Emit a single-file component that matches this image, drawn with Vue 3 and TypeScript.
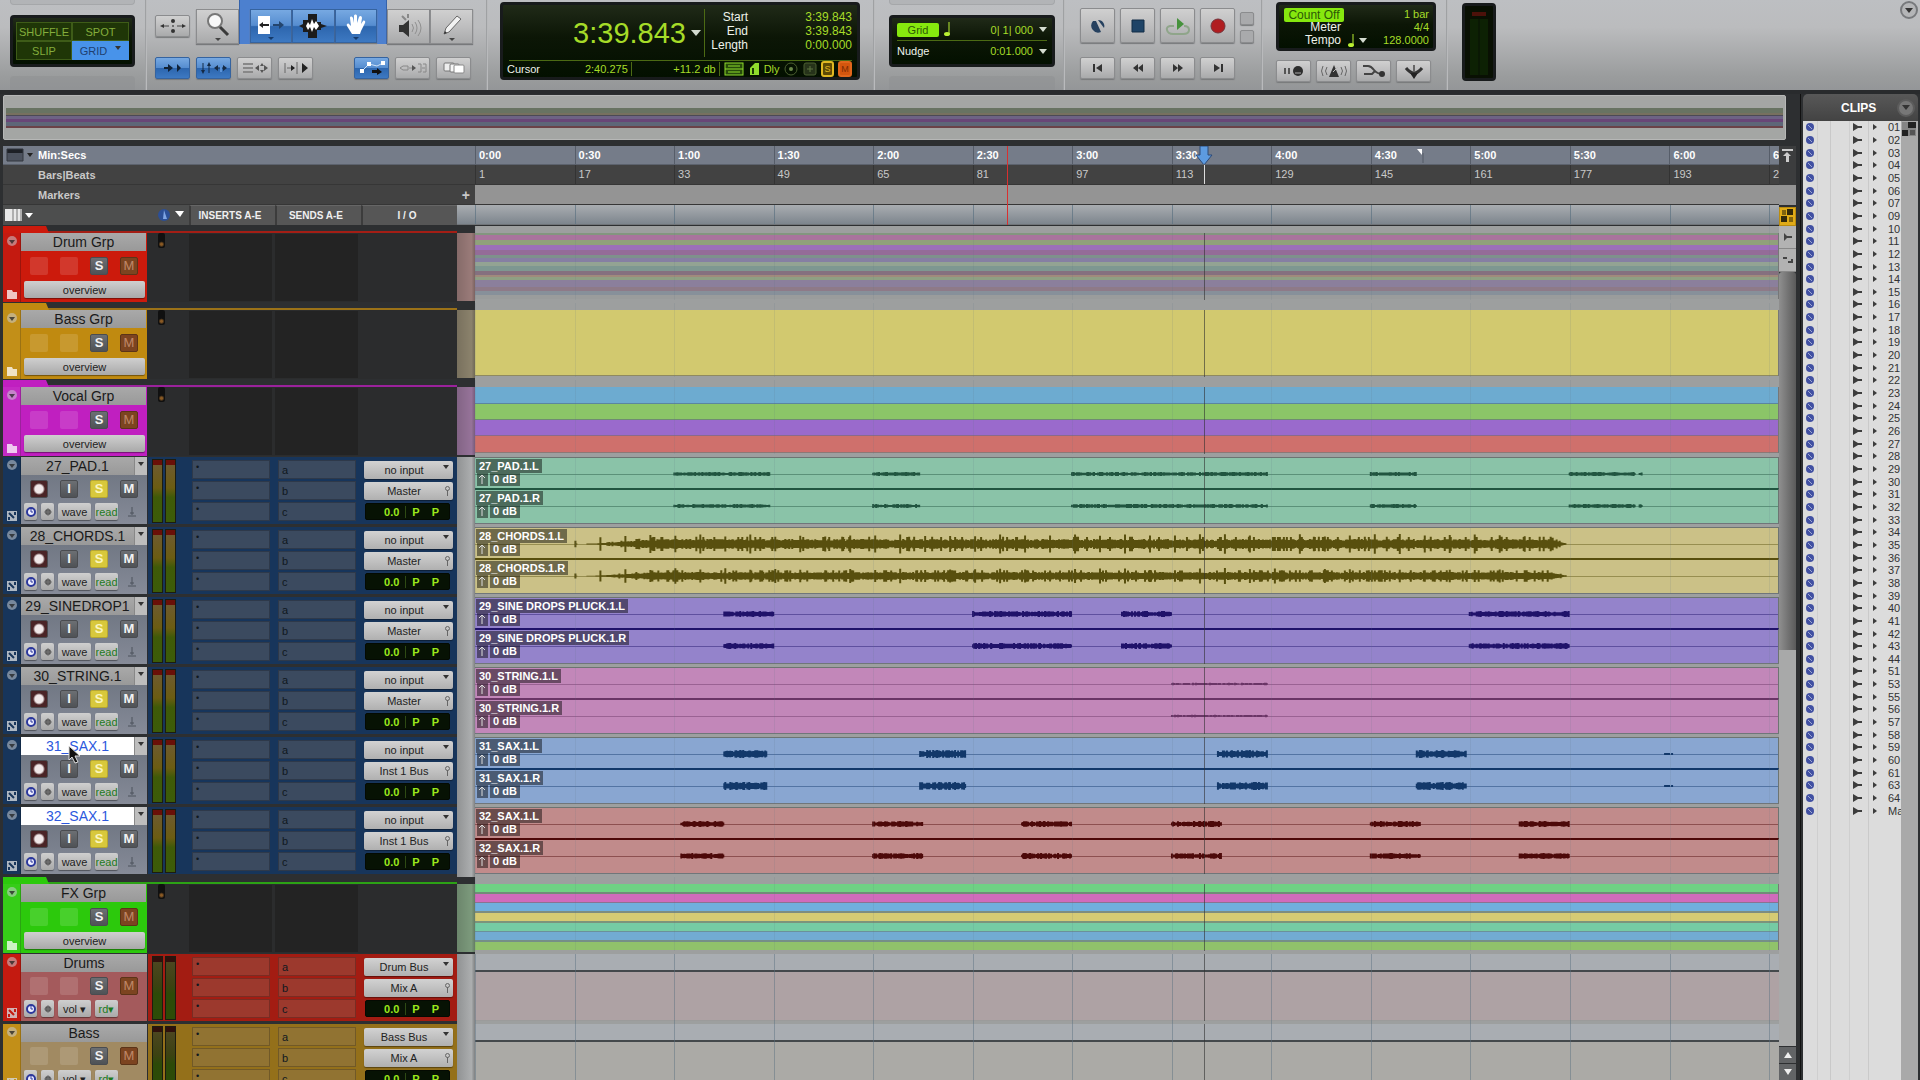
<script setup lang="ts">
interface Take {
  label: string
  lane: string
  ink: string
  level: number
  spans: [number, number][]
  dense?: boolean
}
interface Track {
  kind: 'group' | 'audio' | 'aux'
  name: string
  color: string
  side: string
  body?: string
  scale?: string
  input?: string
  output?: string
  selected?: boolean
  stripes?: [string, number][]
  take?: Take
}

const total = 393
const playhead = 219.843
const cursor = 160.275
const sessionEnd = 285
const at = (s: number) => `${(s / total) * 100}%`

const marks = Array.from({ length: 14 }, (_, i) => ({
  time: `${Math.floor(i / 2)}:${i % 2 ? '30' : '00'}`,
  bar: i * 16 + 1,
}))

const noise = (n: number) => {
  const v = Math.sin(n * 12.9898) * 43758.5453
  return v - Math.floor(v)
}

const waveWidth = 1304
function wave(take: Take, seed: number): string {
  let d = ''
  for (const [from, to] of take.spans) {
    const a = Math.round((from / total) * waveWidth)
    const b = Math.round((to / total) * waveWidth)
    for (let x = a; x < b; x++) {
      const r = noise(x + seed * 977)
      let h = take.level * (0.4 + r * 0.6)
      if (take.dense) {
        const k = x - a
        const fade = Math.min(1, Math.max(0, (k - 20) / 60)) * Math.min(1, (b - x) / 16)
        h = (2.6 + r * 2.2 + (r > 0.88 ? 2 : 0)) * fade + 0.4
        if (k % 25 < 1 && b - x > 20) h = take.level * (0.7 + r * 0.3) * Math.min(1, (k + 30) / 70)
        if (seed % 2) h *= 0.8
        if (k < 12 && k > 1) continue
      }
      d += `M${x}.5 ${(16 - h).toFixed(1)}V${(16 + h).toFixed(1)}`
    }
  }
  return d
}

const navy = '#17355b'
const audio = (name: string, output: string, take: Take, selected = false): Track => ({
  kind: 'audio', name, color: '#6c7480', side: navy, body: navy, input: 'no input', output, take, selected,
})

const tracks: Track[] = [
  {
    kind: 'group', name: 'Drum Grp', color: '#cc1a0c', side: '#c41a10', scale: '#9a7b79',
    stripes: [
      ['#83967f', 2], ['#a9749d', 5], ['#90a17a', 5], ['#9c70b8', 5], ['#946c98', 5], ['#7e918c', 3],
      ['#867fa3', 4], ['#93a393', 4], ['#7e9791', 5], ['#85707f', 4], ['#a08a7c', 2], ['#8f9f83', 3],
      ['#8b7f9c', 7], ['#8e7a88', 4], ['#87909a', 4], ['#9a9c9c', 4],
    ],
  },
  { kind: 'group', name: 'Bass Grp', color: '#c08a10', side: '#c28f18', scale: '#8b826c', stripes: [['#d2c96f', 65], ['#8f8a60', 1]] },
  {
    kind: 'group', name: 'Vocal Grp', color: '#c01fc0', side: '#c42bc4', scale: '#967399',
    stripes: [
      ['#6dabd0', 16], ['#5b86a0', 1], ['#8bc568', 15], ['#6f8a72', 1], ['#9a6acc', 15], ['#8a6a8c', 1], ['#cf706c', 16], ['#8d7876', 1],
    ],
  },
  audio('27_PAD.1', 'Master', {
    label: '27_PAD.1', lane: '#8ac3a8', ink: '#215540', level: 2,
    spans: [[60, 89], [120, 134], [180, 239], [270, 284], [330, 350], [351, 352]],
  }),
  audio('28_CHORDS.1', 'Master', {
    label: '28_CHORDS.1', lane: '#cbc187', ink: '#584f0e', level: 10, dense: true, spans: [[30, 329]],
  }),
  audio('29_SINEDROP1', 'Master', {
    label: '29_SINE DROPS PLUCK.1', lane: '#9483cb', ink: '#20126a', level: 3,
    spans: [[75, 90], [150, 180], [195, 210], [300, 330]],
  }),
  audio('30_STRING.1', 'Master', {
    label: '30_STRING.1', lane: '#c287b9', ink: '#6a3566', level: 1.2, spans: [[210, 239]],
  }),
  audio('31_SAX.1', 'Inst 1 Bus', {
    label: '31_SAX.1', lane: '#89a6d1', ink: '#12386a', level: 4,
    spans: [[75, 88], [134, 148], [224, 239], [284, 299]],
  }, true),
  audio('32_SAX.1', 'Inst 1 Bus', {
    label: '32_SAX.1', lane: '#c18b8b', ink: '#4d0909', level: 3,
    spans: [[62, 75], [120, 135], [165, 180], [210, 225], [270, 285], [315, 330]],
  }, true),
  {
    kind: 'group', name: 'FX Grp', color: '#2cc90c', side: '#36cc18', scale: '#7c9a7c',
    stripes: [
      ['#6fd184', 8], ['#718c78', 2], ['#d06bbb', 8], ['#8a7390', 1], ['#70afdd', 8], ['#7d8d80', 2], ['#d5cb74', 8],
      ['#7c937c', 2], ['#75cba4', 8], ['#6b919a', 1], ['#72abd2', 8], ['#758f88', 2], ['#90c26b', 8],
    ],
  },
  { kind: 'aux', name: 'Drums', color: '#a45a5c', side: '#c41a10', body: '#a31c12', input: 'Drum Bus', output: 'Mix A', scale: '#aea2a4' },
  { kind: 'aux', name: 'Bass', color: '#a18a62', side: '#c28f18', body: '#94701a', input: 'Bass Bus', output: 'Mix A', scale: '#abaaa6' },
]

const range = (a: number, b: number) => Array.from({ length: b - a + 1 }, (_, i) => String(a + i).padStart(2, '0'))
const clips = [
  ...range(1, 7), ...range(9, 44), '51', '53', ...range(55, 61), '63', '64', 'Master',
]
</script>

<template>
  <div class="app">
    <header class="toolbar">
      <section class="cluster modes">
        <div class="recess top"></div>
        <div class="lcd mode-grid">
          <button>SHUFFLE</button><button>SPOT</button>
          <button>SLIP</button><button class="on">GRID<i class="tri"></i></button>
        </div>
        <div class="recess bottom"></div>
      </section>

      <section class="cluster tools">
        <div class="tool-row">
          <button class="btn small" aria-label="Zoom toggle">
            <svg width="30" height="18" viewBox="0 0 30 18"><path d="M4 9h7M19 9h7" stroke="#444" /><path d="M2 9l4-2v4zM28 9l-4-2v4z" fill="#333" /><circle cx="15" cy="4" r="2" fill="#333" /><circle cx="15" cy="14" r="2" fill="#333" /><circle cx="15" cy="9" r="1" fill="#555" /></svg>
          </button>
          <div class="strip">
            <button class="btn tool" aria-label="Zoomer">
              <svg width="30" height="32" viewBox="0 0 30 32"><path d="M16 15l9 9" stroke="#3a3a3a" stroke-width="3" /><circle cx="12" cy="10" r="7" fill="#f8f8f8" stroke="#777" stroke-width="2" /><path d="M12 27h6l-3 3z" fill="#444" /></svg>
            </button>
            <div class="smart">
              <button class="btn tool blue" aria-label="Trim">
                <svg width="34" height="32" viewBox="0 0 34 32"><path d="M4 6h12v18H4z" fill="#fff" /><path d="M6 15h9" stroke="#222" stroke-width="2" /><path d="M5 15l4-3v6z" fill="#222" /><path d="M19 15h8" stroke="#23456e" stroke-width="2" /><path d="M30 15l-5-4v8z" fill="#23456e" /><path d="M14 27h6l-3 3z" fill="#153a6a" /></svg>
              </button>
              <button class="btn tool blue" aria-label="Selector">
                <svg width="34" height="32" viewBox="0 0 34 32"><path d="M12 4h9v8h4v2l6 2-6 2v2h-4v8h-9v-6H7v-4l-4-2 4-2v-4h5z" fill="#1c1c1c" /><path d="M10 16l2-4 2 3 2-6 2 5 2-3 3 5-3 4-2-3-2 5-2-5-2 3z" fill="#fff" /></svg>
              </button>
              <button class="btn tool blue" aria-label="Grabber">
                <svg width="30" height="32" viewBox="0 0 30 32"><path d="M11 24l-5-8c-1-2 1-3 2-2l2 2-1-8c0-2 2-2 3 0l1 5V6c0-2 3-2 3 0v7l2-6c1-2 3-1 3 1l-1 6 2-3c1-1 3 0 2 2l-4 8-1 3z" fill="#fff" /><path d="M12 27h6l-3 3z" fill="#153a6a" /></svg>
              </button>
            </div>
            <button class="btn tool" aria-label="Scrubber">
              <svg width="30" height="32" viewBox="0 0 30 32"><path d="M5 14h4l6-5v17l-6-5H5z" fill="#333" /><path d="M8 5l4 4M14 3v4" stroke="#888" stroke-width="2" /><path d="M18 13q3 4 0 8M21 11q4 6 0 12M24 9q6 8 0 16" fill="none" stroke="#909090" stroke-width="1" /></svg>
            </button>
            <button class="btn tool" aria-label="Pencil">
              <svg width="30" height="32" viewBox="0 0 30 32"><path d="M7 23l2-6L20 5l4 3-12 13z" fill="#f2f2f2" stroke="#666" /><path d="M7 23l1-3 2 2z" fill="#333" /><path d="M12 27h6l-3 3z" fill="#444" /></svg>
            </button>
          </div>
        </div>
        <div class="btn-row">
          <button class="btn small blue" aria-label="Tab to transients"><svg width="28" height="14" viewBox="0 0 28 14"><path d="M5 7h5" stroke="#123" stroke-width="2" /><path d="M9 3l5 4-5 4zM18 3l4 4-4 4z" fill="#102238" /></svg></button>
          <button class="btn small blue" aria-label="Link timeline"><svg width="30" height="14" viewBox="0 0 30 14"><path d="M4 2v8M10 4v8M17 7h9" stroke="#152a44" stroke-width="1" /><path d="M2 9h4l-2 4zM8 5h4l-2-4zM15 7l4-3v6zM28 7l-4-3v6z" fill="#152a44" /><path d="M22 3v8" stroke="#5c94d8" stroke-width="2" /></svg></button>
          <button class="btn small" aria-label="Link track"><svg width="30" height="14" viewBox="0 0 30 14"><path d="M3 3h10M3 7h10M3 11h10" stroke="#888" stroke-width="2" /><path d="M15 7l4-3v6zM28 7l-4-3v6zM22 2l2 3h-4zM22 12l2-3h-4z" fill="#555" /></svg></button>
          <button class="btn small" aria-label="Insertion follows playback"><svg width="30" height="14" viewBox="0 0 30 14"><path d="M4 2v10M16 1v12" stroke="#666" /><path d="M6 7h7" stroke="#666" /><path d="M10 4l4 3-4 3zM21 2l6 5-6 5z" fill="#222" /></svg></button>
          <button class="btn small blue auto" aria-label="Automation follows edit"><svg width="28" height="16" viewBox="0 0 28 16"><path d="M4 11l7-7 8 2 6-3" fill="none" stroke="#cfe2f8" /><path d="M2 9h4v4H2zM9 2h4v4H9zM23 1h4v4h-4z" fill="#fff" /><path d="M14 10h5V8l5 4-5 3v-2h-5z" fill="#111" /></svg></button>
          <button class="btn small" aria-label="Mirrored editing"><svg width="30" height="14" viewBox="0 0 30 14"><path d="M2 7l3-2h5v4H5zM11 7h6" fill="none" stroke="#888" /><path d="M14 4l4 3-4 3z" fill="#555" /><path d="M20 3h3v8h-3M25 3h3v8h-3M24 7h3" fill="none" stroke="#888" /></svg></button>
          <button class="btn small" aria-label="Layered editing"><svg width="26" height="16" viewBox="0 0 26 16"><rect x="3" y="3" width="10" height="8" rx="1" fill="#eee" stroke="#777" /><rect x="9" y="4" width="9" height="8" rx="1" fill="#f6f6f6" stroke="#777" /><rect x="13" y="5" width="10" height="8" rx="1" fill="#fff" stroke="#888" /></svg></button>
        </div>
      </section>

      <section class="cluster counter-cluster">
        <div class="lcd counter">
          <div class="counter-top">
            <div class="main-time">3:39.843<i class="tri light"></i></div>
            <dl class="sel-times">
              <dt>Start</dt><dd>3:39.843</dd>
              <dt>End</dt><dd>3:39.843</dd>
              <dt>Length</dt><dd>0:00.000</dd>
            </dl>
          </div>
          <div class="counter-bottom">
            <span class="white">Cursor</span>
            <span class="cell c1">2:40.275</span>
            <span class="cell c2">+11.2 db</span>
            <svg width="20" height="14" viewBox="0 0 20 14"><rect x="1" y="1" width="18" height="12" fill="#274b0a" stroke="#8fdc2c" /><path d="M1 7h18M4 4h12M4 10h12" stroke="#8fdc2c" /></svg>
            <svg width="12" height="14" viewBox="0 0 12 14"><path d="M2 13V6l5-5h4v12z" fill="#8fdc2c" /><path d="M5 12V6" stroke="#1d3a06" stroke-width="2" /></svg>
            <span>Dly</span>
            <svg width="15" height="14" viewBox="0 0 15 14"><circle cx="7" cy="7" r="6" fill="none" stroke="#4b5f30" /><circle cx="7" cy="7" r="2" fill="#6a8848" /></svg>
            <svg width="14" height="14" viewBox="0 0 14 14"><rect x="1" y="1" width="12" height="12" rx="2" fill="#26331a" stroke="#4b5f30" /><path d="M4 7h6M7 4v6" stroke="#5c7440" /></svg>
            <span class="badge yellow">S</span>
            <span class="badge orange">M</span>
          </div>
        </div>
      </section>

      <section class="cluster grid-cluster">
        <div class="recess top"></div>
        <div class="lcd gridbox">
          <div class="grid-line"><button class="lit">Grid</button><svg class="note" width="8" height="15" viewBox="0 0 8 15"><path d="M6 0v12" stroke="#b9f032" stroke-width="1" /><ellipse cx="4" cy="12" rx="3" ry="2" fill="#b9f032" /></svg><span class="val">0| 1| 000</span><i class="tri light"></i></div>
          <div class="grid-line second"><span class="white">Nudge</span><span class="val">0:01.000</span><i class="tri light"></i></div>
        </div>
        <div class="recess bottom"></div>
      </section>

      <section class="cluster transport">
        <div class="big-row">
          <button class="btn big" aria-label="Online"><svg width="18" height="18" viewBox="0 0 18 18"><path d="M4 4a7 7 0 0 0 8 11L7 4zM9 3a6 6 0 0 1 6 8z" fill="#26415f" /></svg></button>
          <button class="btn big" aria-label="Stop"><svg width="18" height="18" viewBox="0 0 18 18"><path d="M3 3h12v12H3z" fill="#1f4467" stroke="#122c46" /></svg></button>
          <button class="btn big" aria-label="Play"><svg width="28" height="22" viewBox="0 0 28 22"><path d="M10 11H6q-4 1-3 4 1 4 6 4h10q6 0 6-4t-5-4" fill="none" stroke="#8fa58a" stroke-width="2" /><path d="M13 3l7 6-7 6z" fill="#46923c" /></svg></button>
          <button class="btn big" aria-label="Record"><svg width="18" height="18" viewBox="0 0 18 18"><circle cx="9" cy="9" r="7" fill="#b01d20" stroke="#74333a" /></svg></button>
          <div class="tiny"><button class="btn" aria-label="Pre-roll"></button><button class="btn" aria-label="Post-roll"></button></div>
        </div>
        <div class="btn-row">
          <button class="btn small" aria-label="Return to zero"><svg width="16" height="12" viewBox="0 0 16 12"><path d="M4 2v8" stroke="#333" stroke-width="2" /><path d="M12 2v8L6 6z" fill="#333" /></svg></button>
          <button class="btn small" aria-label="Rewind"><svg width="16" height="12" viewBox="0 0 16 12"><path d="M8 2v8L3 6zM13 2v8L8 6z" fill="#333" /></svg></button>
          <button class="btn small" aria-label="Fast forward"><svg width="16" height="12" viewBox="0 0 16 12"><path d="M3 2v8l5-4zM8 2v8l5-4z" fill="#333" /></svg></button>
          <button class="btn small" aria-label="Go to end"><svg width="16" height="12" viewBox="0 0 16 12"><path d="M12 2v8" stroke="#333" stroke-width="2" /><path d="M4 2v8l6-4z" fill="#333" /></svg></button>
        </div>
      </section>

      <section class="cluster tempo-cluster">
        <div class="lcd tempo">
          <button class="lit">Count Off</button><span class="val">1 bar</span>
          <span class="white">Meter</span><span class="val">4/4</span>
          <span class="white">Tempo</span>
          <span class="val"><svg width="8" height="14" viewBox="0 0 8 14"><path d="M6 0v11" stroke="#b9f032" /><ellipse cx="4" cy="11" rx="3" ry="2" fill="#b9f032" /></svg><i class="tri light"></i><b>128.0000</b></span>
        </div>
        <div class="btn-row">
          <button class="btn small" aria-label="Wait for note"><svg width="24" height="14" viewBox="0 0 24 14"><path d="M3 4v6M7 4v6" stroke="#555" stroke-width="2" /><circle cx="16" cy="7" r="5" fill="#2d2d2d" /><path d="M13 9h6" stroke="#aaa" /></svg></button>
          <button class="btn small" aria-label="Metronome"><svg width="30" height="14" viewBox="0 0 30 14"><path d="M4 2q-3 5 0 10M8 3q-3 4 0 8M22 3q3 4 0 8M26 2q3 5 0 10" fill="none" stroke="#666" /><path d="M15 1l5 12H10z" fill="#333" /><path d="M14 8l5-5" stroke="#bbb" /></svg></button>
          <button class="btn small" aria-label="MIDI merge"><svg width="26" height="14" viewBox="0 0 26 14"><path d="M2 2h5q3 0 6 4t9 4M3 10h8l3-3" fill="none" stroke="#444" stroke-width="2" /><circle cx="21" cy="10" r="3" fill="#333" /></svg></button>
          <button class="btn small" aria-label="Tempo ruler"><svg width="22" height="18" viewBox="0 0 22 18"><path d="M3 6q4 5 8 5t8-5" fill="none" stroke="#333" stroke-width="3" /><path d="M11 10V3" stroke="#666" stroke-width="2" /><path d="M7 11h8l-4 6z" fill="#222" /></svg></button>
        </div>
      </section>

      <div class="lcd vu"><span class="clip-led"></span><span class="vu-bars"></span></div>
      <button class="round" aria-label="Toolbar menu"><i class="tri"></i></button>
    </header>

    <div class="body">
      <main class="edit">
        <div class="universe"><div class="universe-bands"></div></div>
        <div class="work">
          <div class="main">
            <div class="ruler time">
              <div class="ruler-name">
                <svg width="30" height="14" viewBox="0 0 30 14"><path d="M1 1h16v12H1z" fill="#4c525e" /><path d="M1 3h16" stroke="#1d2026" stroke-width="4" /><path d="M1 1h16v12H1z" fill="none" stroke="#33373f" /><path d="M21 5h6l-3 4z" fill="#222" /></svg>
                <span>Min:Secs</span>
              </div>
              <div class="ticks">
                <span v-for="m in marks" :key="m.time" class="tick" :style="{ flexBasis: at(30) }">{{ m.time }}</span>
                <svg class="locator" :style="{ left: at(playhead) }" width="18" height="20" viewBox="0 0 18 20"><path d="M5 0h8v9h4l-8 10L1 9h4z" fill="#5d9be0" stroke="#2c4a78" /></svg>
                <svg class="flag" :style="{ left: at(sessionEnd) }" width="8" height="16" viewBox="0 0 8 16"><path d="M1 1h5v6z" fill="#fff" /><path d="M7 5v10" stroke="#555b66" /></svg>
              </div>
            </div>
            <div class="ruler bars">
              <div class="ruler-name"><span>Bars|Beats</span></div>
              <div class="ticks">
                <span v-for="m in marks" :key="m.bar" class="tick" :style="{ flexBasis: at(30) }">{{ m.bar }}</span>
                <i class="stem" :style="{ left: at(playhead) }"></i>
              </div>
            </div>
            <div class="ruler markers">
              <div class="ruler-name"><span>Markers</span><button class="plus">+</button></div>
              <div class="ticks"></div>
            </div>
            <div class="heads">
              <div class="h-first"><svg width="32" height="14" viewBox="0 0 32 14"><path d="M1 1h17v12H1z" fill="#e8e8e8" /><path d="M9 1v12M13 1v12M17 1v12" stroke="#777" /><path d="M21 5h8l-4 5z" fill="#fff" /></svg>
                <svg class="end" width="28" height="14" viewBox="0 0 28 14"><circle cx="7" cy="7" r="6" fill="#2c4f96" /><path d="M7 2l3 9H6z" fill="#7fa5e4" /><path d="M18 3h9l-4 6z" fill="#fff" /></svg></div>
              <div class="h-col">INSERTS A-E</div>
              <div class="h-col">SENDS A-E</div>
              <div class="h-col">I / O</div>
              <div class="h-lane"></div>
            </div>
            <i class="edit-cursor" :style="{ '--pos': cursor / total }"></i>

            <div v-for="(t, i) in tracks" :key="t.name" class="track" :class="t.kind" :style="{ '--c': t.color, '--side': t.side, '--body': t.body, '--scale': t.scale }">
              <template v-if="t.kind === 'group'">
                <div class="tab"></div>
                <div class="tabline"></div>
              </template>
              <div class="side">
                <svg width="12" height="12" viewBox="0 0 12 12"><circle cx="6" cy="6" r="5" fill="#c8ccd2" fill-opacity=".55" /><path d="M3 5h6L6 9z" fill="#222" fill-opacity=".75" /></svg>
                <svg v-if="t.kind === 'group'" width="12" height="12" viewBox="0 0 12 12"><path d="M1 2h5l1 2h4v7H1z" fill="#fff" fill-opacity=".75" /></svg>
                <svg v-else width="12" height="12" viewBox="0 0 12 12"><path d="M1 1h10v10H1z" fill="#d5d8dc" fill-opacity=".8" /><path d="M3 3l5 5M3 10V7M9 2v3" :stroke="t.side" stroke-width="2" /></svg>
              </div>
              <div class="panel">
                <div class="name-row">
                  <button class="name" :class="{ selected: t.selected }">{{ t.name }}</button>
                  <button v-if="t.kind === 'audio'" class="name-menu" :aria-label="`${t.name} playlists`"><i class="tri"></i></button>
                  <svg v-if="t.name === '31_SAX.1'" class="pointer" width="14" height="20" viewBox="0 0 14 20"><path d="M2 1v14l3-3 3 6 3-1-3-6h5z" fill="#111" stroke="#ddd" /></svg>
                </div>
                <div class="keys">
                  <button class="key" :class="t.kind === 'audio' ? 'rec' : 'ghost'" aria-label="Record enable"></button>
                  <button class="key" :class="{ ghost: t.kind !== 'audio' }">{{ t.kind === 'audio' ? 'I' : '' }}</button>
                  <button class="key" :class="{ solo: t.kind === 'audio' }">S</button>
                  <button class="key" :class="{ muted: t.kind !== 'audio' }">M</button>
                </div>
                <div v-if="t.kind === 'group'" class="opts"><select class="pill wide" :aria-label="`${t.name} view`"><option>overview</option></select></div>
                <div v-else class="opts">
                  <button class="pill sq" aria-label="Time base"><svg width="10" height="10" viewBox="0 0 10 10"><circle cx="5" cy="5" r="4" fill="#eef" stroke="#2b379c" stroke-width="2" /><path d="M5 2v3h2" stroke="#2b379c" fill="none" /></svg></button>
                  <button class="pill sq" aria-label="Elastic audio"><svg width="8" height="8" viewBox="0 0 8 8"><circle cx="4" cy="4" r="3" fill="#555" /><path d="M0 4h8M4 0v8" stroke="#777" /></svg></button>
                  <select class="pill view" :aria-label="`${t.name} view`"><option>{{ t.kind === 'audio' ? 'wave' : 'vol ▾' }}</option></select>
                  <select class="pill mode" :aria-label="`${t.name} automation`"><option>{{ t.kind === 'audio' ? 'read' : 'rd▾' }}</option></select>
                  <svg v-if="t.kind === 'audio'" class="metro" width="10" height="12" viewBox="0 0 10 12"><path d="M5 1v8M1 10h8M3 7h4" stroke="#4c525c" fill="none" /></svg>
                </div>
              </div>
              <template v-if="t.kind === 'group'">
                <div class="gcell"><i class="gled"></i></div>
                <div class="gcell dark"></div>
                <div class="gcell dark"></div>
                <div class="gcell"></div>
              </template>
              <template v-else>
                <div class="cell meter"><i></i><i></i></div>
                <div class="cell slots"><button v-for="n in 3" :key="n" class="slot dot" :aria-label="`Insert ${n}`">•</button></div>
                <div class="cell slots"><button v-for="s in ['a', 'b', 'c']" :key="s" class="slot">{{ s }}</button></div>
                <div class="cell io">
                  <label class="sel"><select class="pill" :aria-label="`${t.name} input`"><option>{{ t.input }}</option></select><i class="tri"></i></label>
                  <label class="sel out"><select class="pill" :aria-label="`${t.name} output`"><option>{{ t.output }}</option></select><i class="fader"></i></label>
                  <div class="vol"><span>0.0</span><i></i><span>P</span><span>P</span></div>
                </div>
              </template>
              <div class="scale"></div>
              <div class="lane">
                <div v-if="t.stripes" class="stripes"><i v-for="(s, k) in t.stripes" :key="k" :style="{ background: s[0], flexGrow: s[1] }"></i></div>
                <template v-else-if="t.take">
                  <div v-for="(ch, k) in ['L', 'R']" :key="ch" class="channel" :class="ch" :style="{ background: t.take.lane, '--ink': t.take.ink }">
                    <svg class="wave" :viewBox="`0 0 ${waveWidth} 32`" preserveAspectRatio="none"><path :d="wave(t.take, i * 2 + k)" :stroke="t.take.ink" stroke-width="2" /><path v-if="t.name === '31_SAX.1'" d="M1190 16h6M1197 16h2" :stroke="t.take.ink" stroke-width="2" /></svg>
                    <span class="tag">{{ t.take.label }}.{{ ch }}</span>
                    <span class="gain"><b><svg width="9" height="11" viewBox="0 0 9 11"><path d="M4 1v9M1 4l3-3 3 3" stroke="#ddd" fill="none" /></svg></b><b>0 dB</b></span>
                  </div>
                </template>
                <div v-else class="autom"></div>
                <i class="playline" :style="{ left: at(playhead) }"></i>
              </div>
            </div>
          </div>

          <div class="scroll">
            <div class="s-time"><svg width="14" height="16" viewBox="0 0 14 16"><path d="M2 2h11" stroke="#ccc" stroke-width="2" /><path d="M7 4l4 4H9v6H6V8H3z" fill="#ccc" /></svg></div>
            <div class="s-mark"></div>
            <button class="s-grid" aria-label="Grid colour"><svg width="15" height="18" viewBox="0 0 15 18"><path d="M7 1h6v6H7zM1 8h6v6H1z" fill="#33290a" /><path d="M2 2h4v5H2zM9 9h4v5H9z" fill="#80630f" /></svg></button>
            <button class="s-btn" aria-label="Audio zoom"><svg width="12" height="10" viewBox="0 0 12 10"><path d="M2 1v8l3-3h5V4H5z" fill="#444" /></svg></button>
            <button class="s-btn" aria-label="MIDI zoom"><svg width="12" height="10" viewBox="0 0 12 10"><path d="M1 3h4M6 7h4V4" stroke="#444" stroke-width="2" fill="none" /></svg></button>
            <div class="s-thumb"></div>
            <div class="s-track"></div>
            <button class="s-arrow up" aria-label="Scroll up"><i></i></button>
            <button class="s-arrow down" aria-label="Scroll down"><i></i></button>
          </div>
        </div>
      </main>

      <aside class="clips">
        <div class="clips-head"><h2>CLIPS</h2><button class="round dark" aria-label="Clips menu"><i class="tri"></i></button></div>
        <div class="clips-body">
          <ul>
            <li v-for="c in clips" :key="c">
              <svg width="12" height="10" viewBox="0 0 12 10"><circle cx="6" cy="5" r="4" fill="#4150a2" /><path d="M4 3l4 4" stroke="#a0a9d4" stroke-width="1" /></svg>
              <svg class="wv" width="10" height="8" viewBox="0 0 10 8"><path d="M1 0v8l5-3h4V3H6z" fill="#3c3c3c" /></svg>
              <svg class="ar" width="6" height="8" viewBox="0 0 6 8"><path d="M1 1v6l4-3z" fill="#3c3c3c" /></svg>
              <span>{{ c }}</span>
            </li>
          </ul>
          <div class="clips-scroll"><svg width="16" height="16" viewBox="0 0 16 16"><path d="M1 1h14v14H1z" fill="#858585" /><path d="M7 1h8v6H7zM1 9h6v6H1z" fill="#222" /><path d="M9 9h5v5H9z" fill="#555" /></svg></div>
        </div>
      </aside>
    </div>
  </div>
</template>

<style>
body { margin: 0; background: #2d2f31; }
</style>

<style scoped>
* { box-sizing: border-box; }
.app { height: 100vh; display: flex; flex-direction: column; overflow: hidden; font: 11px/14px "Liberation Sans", Arial, sans-serif; color: #222; background: #2d2f31; }
button, select { font: inherit; color: inherit; margin: 0; padding: 0; border: 0; background: none; appearance: none; display: flex; align-items: center; justify-content: center; }
svg { display: block; flex: none; }
.tri { width: 0; height: 0; border: 3px solid transparent; border-top: 4px solid #333; border-bottom: 0; }
.tri.light { border-width: 5px 4px 0; border-top-color: #d4dcd0; }

.toolbar { height: 90px; flex: none; display: flex; background: linear-gradient(#bdbfc2, #bbbcbe 30%, #9a9c9d 85%, #949698); }
.cluster { flex: none; border-right: 1px solid #9fa1a3; box-shadow: 1px 0 #b9babc; }
.modes { width: 146px; padding: 0 10px; }
.recess { border: 1px solid #8f9193; background: #a9abad; }
.recess.top { height: 5px; border-top: 0; border-radius: 0 0 4px 4px; opacity: .5; }
.recess.bottom { height: 14px; margin-top: 9px; border-bottom: 0; border-radius: 4px 4px 0 0; background: #8f9193; opacity: .5; }
.lcd { background: linear-gradient(#202a18, #0c1606 45%, #031000); border: 3px solid #181b1c; border-radius: 4px; color: #a6dc28; }
.mode-grid { height: 52px; width: 125px; margin-top: 10px; padding: 4px 3px; display: grid; grid-template-columns: 56px 1fr; grid-template-rows: 1fr 1fr; font-size: 11px; }
.mode-grid button { background: #1f3607; border: 1px solid #3e5c18; color: #84ad3c; }
.mode-grid .on { background: #4893ea; border-color: #4893ea; color: #1f3f70; align-items: center; }
.mode-grid .on .tri { margin: 0 0 6px 8px; }
.tools { width: 341px; padding-left: 9px; }
.tool-row { height: 43px; display: flex; gap: 6px; }
.tool-row > .small { margin-top: 15px; }
.strip { display: flex; align-items: flex-end; height: 44px; }
.btn { background: linear-gradient(#d0d0d0, #bebebf 50%, #a9aaab); border: 1px solid #8b8c8e; border-radius: 2px; box-shadow: 0 1px 1px #77797b; }
.small { width: 35px; height: 22px; }
.tool { width: 43px; height: 35px; border-radius: 0; }
.blue { background: linear-gradient(#77a9e2, #568dd0 48%, #2d66ae 52%, #3d79c2); border-color: #35639f; }
.smart { width: 148px; height: 44px; padding: 9px 9px 0 10px; display: flex; background: #4c80cf; border: 1px solid #3462ab; border-width: 0 1px; }
.smart .tool { flex: 1; height: 34px; width: auto; }
.btn-row { display: flex; gap: 6px; margin-top: 14px; }
.auto { margin-left: 35px; }
.counter-cluster { width: 387px; padding: 2px 0 0 13px; }
.counter { width: 360px; height: 78px; padding: 2px 5px 0 6px; display: flex; flex-direction: column; }
.counter-top { height: 54px; display: flex; border-bottom: 1px solid #4c6a14; }
.main-time { width: 196px; height: 48px; margin-top: 2px; display: flex; align-items: center; justify-content: flex-end; gap: 5px; padding-right: 3px; border-right: 1px solid #4c6a14; font-size: 29px; }
.main-time .tri { border-width: 6px 5px 0; }
.sel-times { flex: 1; margin: 3px 0 0; display: grid; grid-template-columns: 43px 1fr; grid-auto-rows: 14px; text-align: right; font-size: 12px; }
.sel-times dt, .white { color: #eef2ea; }
.sel-times dd { margin: 0; }
.counter-bottom { flex: 1; display: flex; align-items: center; gap: 4px; font-size: 11px; margin-left: -2px; }
.cell.c1, .cell.c2 { background: none; text-align: right; border-right: 1px solid #4c6a14; padding: 0 3px 0 0; }
.c1 { width: 90px; }
.c2 { width: 86px; }
.badge { width: 14px; height: 16px; border: 2px solid; border-radius: 3px; font-size: 9px; line-height: 12px; text-align: center; }
.yellow { background: #5e4a04; border-color: #e0b822; color: #e0b822; }
.orange { background: #d4560e; border-color: #e0661c; color: #7c2c04; }
.grid-cluster { width: 190px; padding: 0 8px 0 15px; }
.gridbox { margin-top: 10px; height: 52px; padding: 3px 5px; }
.grid-line { display: flex; align-items: center; height: 20px; padding-bottom: 2px; border-bottom: 1px solid #4c6a14; }
.grid-line.second { border: 0; padding: 0; }
.lit { background: #86e80e; color: #2c5806; border-radius: 2px; height: 14px; }
.grid-line .lit { width: 42px; }
.note { margin-left: 4px; }
.val { margin-left: auto; text-align: right; }
.grid-line .tri { margin-left: 6px; }
.transport { width: 198px; padding: 8px 0 0 16px; }
.big-row { display: flex; gap: 5px; }
.transport .btn-row, .tempo-cluster .btn-row { gap: 5px; }
.big { width: 35px; height: 35px; }
.tiny { display: flex; flex-direction: column; justify-content: space-between; padding-top: 4px; }
.tiny .btn { width: 14px; height: 13px; background: #a9aaac; }
.tempo-cluster { width: 185px; padding: 2px 0 0 14px; }
.tempo { width: 160px; height: 49px; padding: 3px 4px 0 5px; display: grid; grid-template-columns: 60px 1fr; grid-auto-rows: 13px; font-size: 12px; line-height: 13px; text-align: right; }
.tempo .white { padding-right: 3px; }
.tempo .val { display: flex; align-items: center; justify-content: flex-end; width: 100%; gap: 4px; font-size: 11px; }
.tempo b { font-weight: 400; width: 58px; }
.tempo-cluster .btn-row { margin-top: 9px; }
.vu { width: 34px; height: 78px; margin: 3px 0 0 15px; padding: 6px 5px 3px; display: flex; flex-direction: column; gap: 3px; background: #091003; }
.clip-led { height: 4px; margin: 0 2px; background: #4c110a; }
.vu-bars { flex: 1; background: linear-gradient(90deg, #0d2104 45%, #0a1804 45% 55%, #0d2104 55%); }
.round { width: 18px; height: 18px; margin: 1px 2px 0 auto; border: 2px solid #77797c; border-radius: 9px; background: #b4b5b7; }
.round .tri { border-width: 5px 4px 0; }

.body { flex: 1; min-height: 0; display: flex; border-top: 4px solid #292b2d; }
.edit { flex: 1; min-width: 0; display: flex; flex-direction: column; padding: 1px 4px 0 3px; }
.universe { flex: none; height: 45px; margin: 0 10px 0 0; padding: 12px 2px 0; background: #a4a6a4; border-radius: 2px; border: 1px solid #b6b7b6; }
.universe-bands { height: 20px; background: linear-gradient(#687362 0 5px, #77705f 5px 7px, #4b4a55 7px 8px, #6d6384 8px 11px, #684677 11px 14px, #5e6678 14px 18px, #6b4248 18px); }
.work { flex: 1; min-height: 0; display: flex; margin-top: 6px; }
.main { flex: 1; min-width: 0; position: relative; overflow: hidden; }
.ruler { display: flex; height: 20px; background: #424242; border-bottom: 1px solid #363636; font-weight: 700; color: #c9c9c9; }
.ruler.time { height: 19px; background: #757c89; color: #fff; border-bottom-color: #5c626d; }
.ruler-name { width: 472px; flex: none; display: flex; align-items: center; padding-left: 35px; }
.time .ruler-name { padding-left: 3px; gap: 2px; }
.plus { margin: 0 5px 0 auto; font-size: 14px; }
.ticks { flex: 1; min-width: 0; display: flex; position: relative; overflow: hidden; }
.tick { flex: none; padding-left: 3px; line-height: 18px; border-left: 1px solid #565d69; }
.bars .tick { border-color: #333; font-weight: 400; }
.markers .ticks { background: #949494; }
.locator { position: absolute; top: 0; margin-left: -9px; }
.flag { position: absolute; top: 2px; margin-left: -5px; }
.stem { position: absolute; top: 0; bottom: 0; width: 1px; background: #ddd; }
.edit-cursor { position: absolute; top: 0; height: 79px; width: 1px; background: #d83030; left: calc(472px + (100% - 472px) * var(--pos)); }
.heads { display: grid; grid-template-columns: 186px 86px 86px 96px 1fr; height: 20px; margin-bottom: 1px; background: #4d4e4e; color: #f0f0f0; font-size: 10px; font-weight: 700; }
.h-first { display: flex; align-items: center; padding: 0 4px 0 1px; }
.end { margin-left: auto; }
.h-col { display: flex; align-items: center; justify-content: center; padding-right: 6px; background: #565656; border-left: 2px solid #3c3c3c; border-top: 1px solid #666; }
.h-lane { padding-left: 18px; border-bottom: 1px solid #707478; background: linear-gradient(#a9adb1, #7d858d); }
.h-lane::after { content: ""; display: block; height: 100%; background: repeating-linear-gradient(90deg, #5a7080aa 0 1px, #0000 1px 7.634%); }

.track { height: 70px; display: grid; grid-template-columns: 18px 127px 41px 86px 86px 96px 18px minmax(0, 1fr); padding-bottom: 3px; }
.track.group { height: 77px; padding-bottom: 1px; grid-template-rows: 7px 1fr; }
.tab { grid-area: 1 / 1 / 2 / 3; width: 46px; background: var(--c); clip-path: polygon(0 0, 43px 0, 46px 100%, 0 100%); }
.tabline { grid-area: 1 / 1 / 2 / 7; align-self: end; height: 2px; background: var(--c); opacity: .75; }
.side { grid-column: 1; background: var(--side); display: flex; flex-direction: column; justify-content: space-between; align-items: center; padding: 2px 1px; border-right: 1px solid #0003; }
.group .side, .group .panel, .group .gcell, .group .scale { grid-row: 2; }
.panel { background: var(--c); display: flex; flex-direction: column; border-right: 1px solid #2a2c30; min-width: 0; }
.audio .panel { background: linear-gradient(#6b727d, #7a808d 60%, #868b98); }
.name-row { display: flex; height: 18px; flex: none; position: relative; }
.name { flex: 1; background: linear-gradient(#a9a9a9, #999); font-size: 14px; color: #1a1a1a; }
.group .name-row { padding-right: 1px; }
.name.selected { background: #fff; color: #2c58dd; }
.name-menu { width: 13px; background: #bdbdbd; border-left: 1px solid #888; align-items: flex-start; padding-top: 5px; }
.pointer { position: absolute; left: 46px; top: 8px; z-index: 2; }
.keys { display: flex; gap: 12px; padding: 5px 0 0 9px; }
.group .keys { padding-top: 6px; }
.key { width: 18px; height: 18px; border-radius: 2px; background: linear-gradient(#6c6f73, #4f5256); border: 1px solid #4a4c50; color: #f2f2f2; font-size: 13px; font-weight: 700; }
.key.rec { background: radial-gradient(circle, #f0e8e8 0 4px, #4a2426 6px); }
.key.solo { background: #d8c83c; color: #fbf6c0; border-color: #b5a632; }
.key.muted { background: #7c4420; color: #c08868; border-color: #5c3418; font-weight: 400; }
.key.ghost { background: #fff2; border: 0; }
.opts { display: flex; gap: 4px; padding: 5px 3px 0; }
.group .opts { padding: 6px 2px 0 3px; }
.pill { height: 17px; background: linear-gradient(#cfcfcf, #a9a9a9); border-radius: 2px; box-shadow: 0 1px 1px #0006; text-align: center; text-align-last: center; font-size: 11px; color: #222; }
.pill.wide { width: 121px; }
.pill.sq { width: 13px; }
.pill.view { width: 33px; }
.pill.mode { width: 23px; color: #1d7a1d; }
.metro { margin: 3px 0 0 5px; }
.gcell { background: #2b2c2d; }
.gcell.dark { background: #232323; border: 1px solid #2b2c2d; border-width: 1px 3px 1px 0; }
.gled { display: block; width: 7px; height: 15px; margin-left: 10px; border-radius: 2px; background: radial-gradient(circle at 50% 75%, #8a5a24 0 1px, #101010 3px); }
.track .cell { background: var(--body); }
.meter { display: flex; gap: 2px; padding: 2px 0 1px 4px; }
.meter i { width: 11px; border: 1px solid #1c1c10; background: linear-gradient(#6a1008 0 5px, #6e5a2e 5px, #6b5c12 45%, #3f5a08 60%, #3c5c08); }
.aux .meter i { background: linear-gradient(#30100c 0 5px, #4c4620 5px, #3c4212 45%, #2c4a08 60%, #2c4c08); }
.slots { display: flex; flex-direction: column; gap: 2px; padding: 3px 5px 0 3px; }
.slot { height: 19px; justify-content: flex-start; padding-left: 3px; background: #8c786950; border: 1px solid #00000038; color: #101820; font-size: 11px; }
.slot.dot { align-items: flex-start; line-height: 12px; font-size: 9px; }
.io { display: flex; flex-direction: column; gap: 3px; padding: 4px 4px 0 3px; }
.sel { display: block; position: relative; height: 18px; }
.sel .pill { width: 100%; height: 18px; padding-right: 9px; background: linear-gradient(#d2d2d2, #b0b0b0); }
.sel .tri { position: absolute; right: 4px; top: 4px; }
.fader { position: absolute; right: 3px; top: 4px; width: 5px; height: 5px; border: 1px solid #666; border-radius: 3px; }
.fader::after { content: ""; position: absolute; left: 1px; top: 3px; width: 1px; height: 6px; background: #666; }
.vol { height: 17px; display: flex; align-items: center; justify-content: flex-end; gap: 12px; padding-right: 10px; margin: 0 3px 0 1px; background: #071204; border: 1px solid #040a02; border-radius: 2px; color: #9be81c; font-size: 11px; font-weight: 700; }
.vol i { width: 1px; height: 12px; margin: 0 -6px; background: #2e4a14; }
.scale { margin-bottom: -3px; background: linear-gradient(90deg, #909293, #acaeaf 80%, #7f8182); }
.group .scale { background: linear-gradient(90deg, #0002, #0000 80%, #0003), var(--scale); margin-bottom: 1px; }
.lane { position: relative; margin-bottom: -3px; padding-bottom: 3px; background: #9d9f9f; display: flex; flex-direction: column; }
.group .lane { grid-row: 1 / 3; grid-column: 8; margin: 0 0 -1px; padding: 7px 0 4px; }
.lane::after { content: ""; position: absolute; inset: 0 0 3px; background: repeating-linear-gradient(90deg, #5a708022 0 1px, #0000 1px 7.634%); }
.aux .lane::after { background: repeating-linear-gradient(90deg, #5a708077 0 1px, #0000 1px 7.634%); inset: 0; }
.stripes { flex: 1; display: flex; flex-direction: column; border-right: 1px solid #777; }
.stripes i { flex: 1 0 0; }
.channel { position: relative; height: 31px; border-top: 1px solid #6d7472; border-right: 1px solid #6d7472; overflow: hidden; }
.channel.R { height: 36px; border-top: 2px solid var(--ink); border-bottom: 1px solid #70767a; }
.channel::before { content: ""; position: absolute; left: 0; right: 0; top: 16px; height: 1px; background: var(--ink); opacity: .45; }
.wave { position: absolute; left: 0; top: 0; width: 100%; height: 32px; }
.tag { position: relative; display: block; width: max-content; height: 14px; margin: 1px 0 0 1px; padding: 0 3px; background: #00000073; color: #fff; font-weight: 700; line-height: 14px; }
.gain { position: relative; display: flex; gap: 2px; margin-left: 2px; color: #fff; }
.gain b { height: 13px; padding: 0 3px; background: #00000073; line-height: 13px; }
.gain b:first-child { padding: 1px 1px; }
.autom { flex: 1; border-bottom: 1px solid #9b9b9b; background: linear-gradient(#a9adb2 0 16px, #44494c 16px 18px, var(--scale) 18px); }
.playline { position: absolute; top: 0; bottom: 3px; width: 1px; background: #30303099; }
.group .playline { top: 7px; }

.scroll { width: 17px; flex: none; display: flex; flex-direction: column; }
.s-time { height: 39px; background: #3c3d3e; padding: 2px 1px; }
.s-mark { height: 20px; background: #949494; }
.s-grid { height: 19px; margin-top: 2px; background: #e0ab18; border: 1px solid #b98b10; }
.s-btn { height: 23px; background: #b2b2b2; border-bottom: 1px solid #888; }
.s-thumb { flex: 0 1 378px; background: linear-gradient(90deg, #8f8f8f, #5a5a5a); border-radius: 3px 3px 0 0; }
.s-track { flex: 1; background: #a8a9a9; }
.s-arrow { height: 16px; margin-top: 1px; background: #626466; }
.s-arrow i { border: 4px solid transparent; border-bottom: 6px solid #eee; border-top: 0; }
.s-arrow.down i { border: 4px solid transparent; border-top: 6px solid #eee; border-bottom: 0; }

.clips { width: 120px; flex: none; padding: 0 2px; display: flex; flex-direction: column; border-left: 1px solid #111; }
.clips-head { height: 27px; flex: none; display: flex; align-items: center; background: linear-gradient(#585858, #434343); border-radius: 5px 5px 0 0; }
.clips h2 { margin: 0 0 0 38px; font-size: 12px; line-height: 16px; color: #fff; }
.round.dark { margin: 0 3px 0 auto; background: #777; border-color: #5c5c5c; }
.clips-body { flex: 1; min-height: 0; display: flex; background: linear-gradient(90deg, transparent 14px, #cfcfcf 14px 15px, transparent 15px 27px, #c9c9c9 27px 28px, transparent 28px 46px, #cfcfcf 46px 47px, transparent 47px 65px, #cacaca 65px 66px, transparent 66px), #dcdcdc; }
.clips ul { flex: 1; margin: 0; padding: 0; list-style: none; display: grid; grid-auto-rows: 1fr; height: 696px; overflow: hidden; min-width: 0; }
.clips li { display: flex; align-items: center; overflow: hidden; min-height: 0; padding-left: 1px; line-height: 12px; color: #333; }
.wv { margin-left: 36px; }
.ar { margin-left: 10px; }
.clips li span { margin-left: 10px; }
.clips-scroll { width: 17px; flex: none; background: #a9a9a9; }
</style>
